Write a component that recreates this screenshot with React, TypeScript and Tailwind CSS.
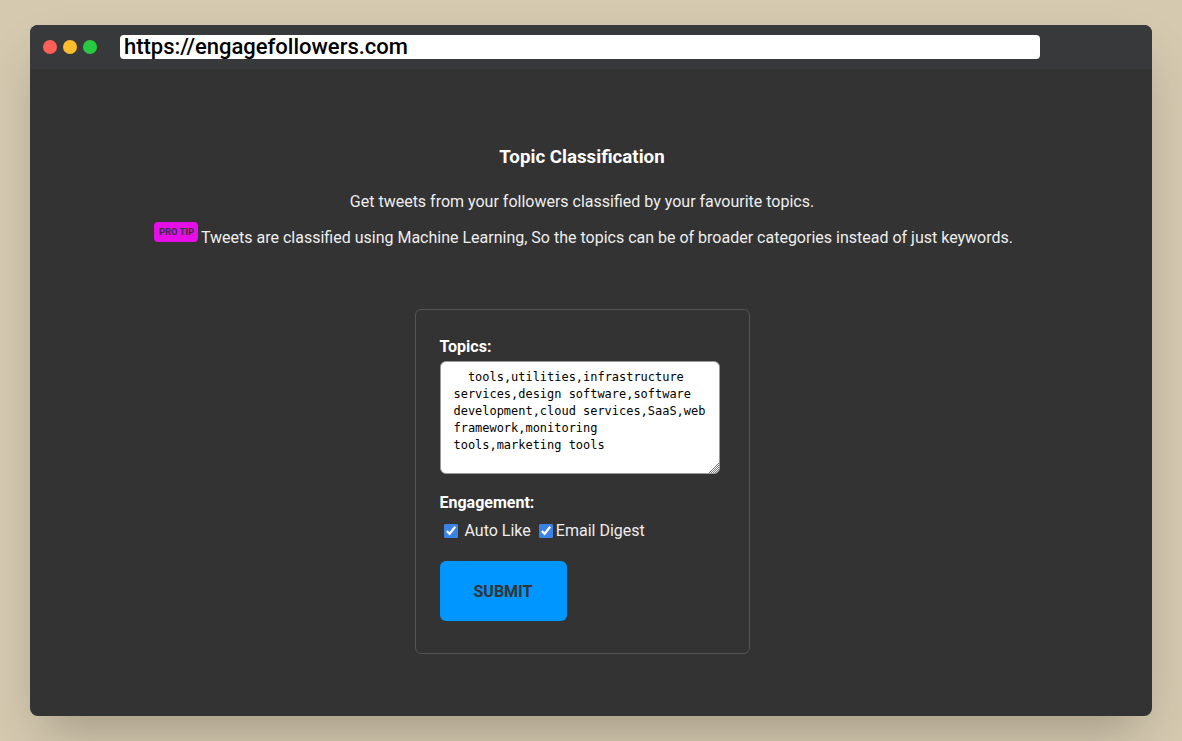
import React from "react";

const App = () => {
  return (
    <div className="h-[741px] overflow-hidden bg-[#d5cab0] pt-[25px] px-[30px] font-['Roboto',sans-serif]">
      <div className="h-[691px] rounded-lg bg-[#333333] overflow-hidden shadow-2xl flex flex-col">
        <div className="h-[44px] bg-[#38393b] flex items-center pl-[13.33px]">
          <div className="flex gap-[6.67px]">
            <span className="w-[13.33px] h-[13.33px] rounded-full bg-[#ff5f56]"></span>
            <span className="w-[13.33px] h-[13.33px] rounded-full bg-[#ffbd2e]"></span>
            <span className="w-[13.33px] h-[13.33px] rounded-full bg-[#27c93f]"></span>
          </div>
          <div className="ml-[23.33px] w-[920px] h-6 rounded bg-white pl-1 text-[22px] leading-6 font-medium text-black">
            https://engagefollowers.com
          </div>
        </div>
        <div className="flex-1 flex flex-col items-center pr-[18px] text-[#eeeeee]">
          <h1 className="mt-[76px] text-[18.72px] leading-6 font-bold text-white">Topic Classification</h1>
          <p className="mt-[21px] leading-6">Get tweets from your followers classified by your favourite topics.</p>
          <p className="mt-3 ml-[3.5px] leading-6 flex items-start">
            <span className="-mt-[4px] mr-[2.5px] w-11 h-5 rounded bg-[#e60ee6] text-[9.3px] leading-5 font-bold text-center text-[#333333]">
              PRO TIP
            </span>
            Tweets are classified using Machine Learning, So the topics can be of broader categories instead of just keywords.
          </p>
          <form className="mt-[59px] w-[335px] h-[345px] rounded-md border border-[#555555] pl-6 pt-[25px]">
            <label className="block font-bold text-white leading-6 text-base">Topics:</label>
            <div className="relative mt-[2px] w-[280px] h-[113px]">
              <textarea
                readOnly
                className="block w-full h-full resize-none rounded-md border border-[#999999] bg-white pt-[7px] pl-[13px] pr-[10px] text-[11.96px] leading-[17px] text-black font-['DejaVu_Sans_Mono',monospace]"
                value={"  tools,utilities,infrastructure services,design software,software development,cloud services,SaaS,web framework,monitoring\ntools,marketing tools"}
              />
              <svg className="absolute right-[1px] bottom-[1px]" width="11" height="11" viewBox="0 0 11 11">
                <path d="M1 11L11 1M3 11L11 3M5 11L11 5M7 11L11 7M9 11L11 9" stroke="#777777" strokeWidth="1" fill="none" />
              </svg>
            </div>
            <label className="mt-[17px] block font-bold text-white leading-6 text-base">Engagement:</label>
            <div className="mt-[4px] flex items-center h-6 pl-[4px]">
              <input type="checkbox" readOnly checked className="w-[14px] h-[14px] accent-[#3b82e6]" />
              <span className="ml-[7px]">Auto Like</span>
              <input type="checkbox" readOnly checked className="ml-2 w-[14px] h-[14px] accent-[#3b82e6]" />
              <span className="ml-[3px]">Email Digest</span>
            </div>
            <button type="button" className="mt-[18px] w-[127px] h-[60px] rounded-md bg-[#0096ff] font-bold text-[#333333] text-base pt-[1px]">
              SUBMIT
            </button>
          </form>
        </div>
      </div>
    </div>
  );
};

export default App;
